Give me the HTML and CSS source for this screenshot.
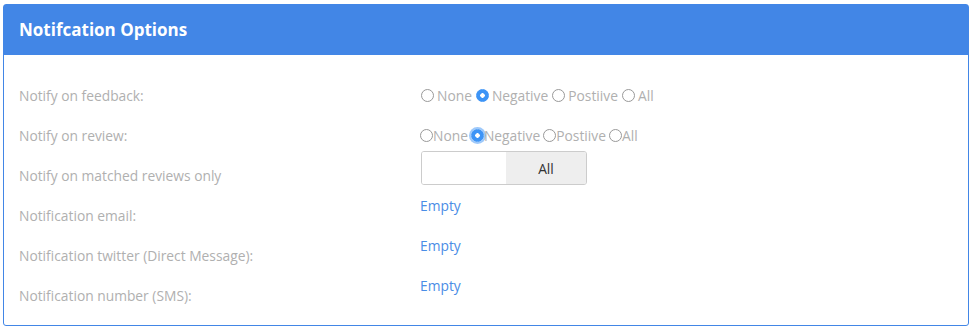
FILE: index.html
```html
<!DOCTYPE html>
<html lang="en">
<head>
    <meta charset="UTF-8">
    <meta name="viewport" content="width=device-width, initial-scale=1.0">
    <title>Notification Options</title>
    <link rel="stylesheet" href="styles.css">
</head>
<body>

    <div class="panel">
        <div class="panel-heading">Notifcation Options</div>
        <div class="panel-body">
            <div class="label">Notify on feedback:</div>
            <div class="value radios">
                <label><input type="radio" name="feedback"> None</label>
                <label><input type="radio" name="feedback" checked> Negative</label>
                <label><input type="radio" name="feedback"> Postiive</label>
                <label><input type="radio" name="feedback"> All</label>
            </div>

            <div class="label">Notify on review:</div>
            <div class="value radios tight">
                <label><input type="radio" name="review">None</label>
                <label><input type="radio" name="review" class="focused" checked>Negative</label>
                <label><input type="radio" name="review">Postiive</label>
                <label><input type="radio" name="review">All</label>
            </div>

            <div class="label">Notify on matched reviews only</div>
            <div class="value toggle-cell">
                <div class="toggle">
                    <span class="toggle-off"></span>
                    <span class="toggle-on">All</span>
                </div>
            </div>

            <div class="label">Notification email:</div>
            <div class="value top"><a href="#" class="empty">Empty</a></div>

            <div class="label">Notification twitter (Direct Message):</div>
            <div class="value top"><a href="#" class="empty">Empty</a></div>

            <div class="label">Notification number (SMS):</div>
            <div class="value top"><a href="#" class="empty">Empty</a></div>
        </div>
    </div>

</body>
</html>
```

FILE: styles.css
```css
body {
    font-family: "Open Sans", Lato, sans-serif;
    background: #fff;
    margin: 4px 9px 0 3px;
}

.panel {
    border: 1px solid #4286e6;
    border-radius: 3px;
    background: #fff;
}

.panel-heading {
    background: #4286e6;
    color: #fff;
    font-size: 17px;
    font-weight: bold;
    height: 50px;
    line-height: 50px;
    padding-left: 15px;
}

.panel-body {
    display: grid;
    grid-template-columns: 401px 1fr;
    grid-auto-rows: 40px;
    padding: 20px 15px 10px 15px;
    font-size: 13.8px;
    color: #b0b0b0;
}

.label {
    display: flex;
    align-items: center;
}

.value {
    display: flex;
    align-items: center;
}

.radios label {
    display: inline-flex;
    align-items: center;
    margin-right: 3px;
}

.radios input {
    appearance: none;
    width: 13px;
    height: 13px;
    margin: 0 3px 0 1px;
    border: 1px solid #999;
    border-radius: 50%;
    background: #fff;
}

.radios input:checked {
    border-color: #3d94f6;
    background: radial-gradient(circle, #fff 0 2px, #3d94f6 2.5px);
}

.radios.tight label {
    margin-right: 3px;
}

.radios.tight input {
    margin: 0;
}

.radios input.focused {
    box-shadow: 0 0 0 2px rgba(61, 148, 246, 0.5);
}

.toggle-cell {
    align-items: flex-start;
    margin-top: -4px;
    padding-left: 1px;
}

.toggle {
    display: flex;
    width: 164px;
    height: 32px;
    border: 1px solid #ccc;
    border-radius: 3px;
    overflow: hidden;
}

.toggle-off {
    width: 84px;
    background: #fff;
}

.toggle-on {
    flex: 1;
    background: #eee;
    color: #333;
    display: flex;
    align-items: center;
    justify-content: center;
}

.value.top {
    align-items: flex-start;
    padding-top: 1px;
}

.empty {
    color: #4a8de6;
    text-decoration: none;
    line-height: 20px;
}
```
